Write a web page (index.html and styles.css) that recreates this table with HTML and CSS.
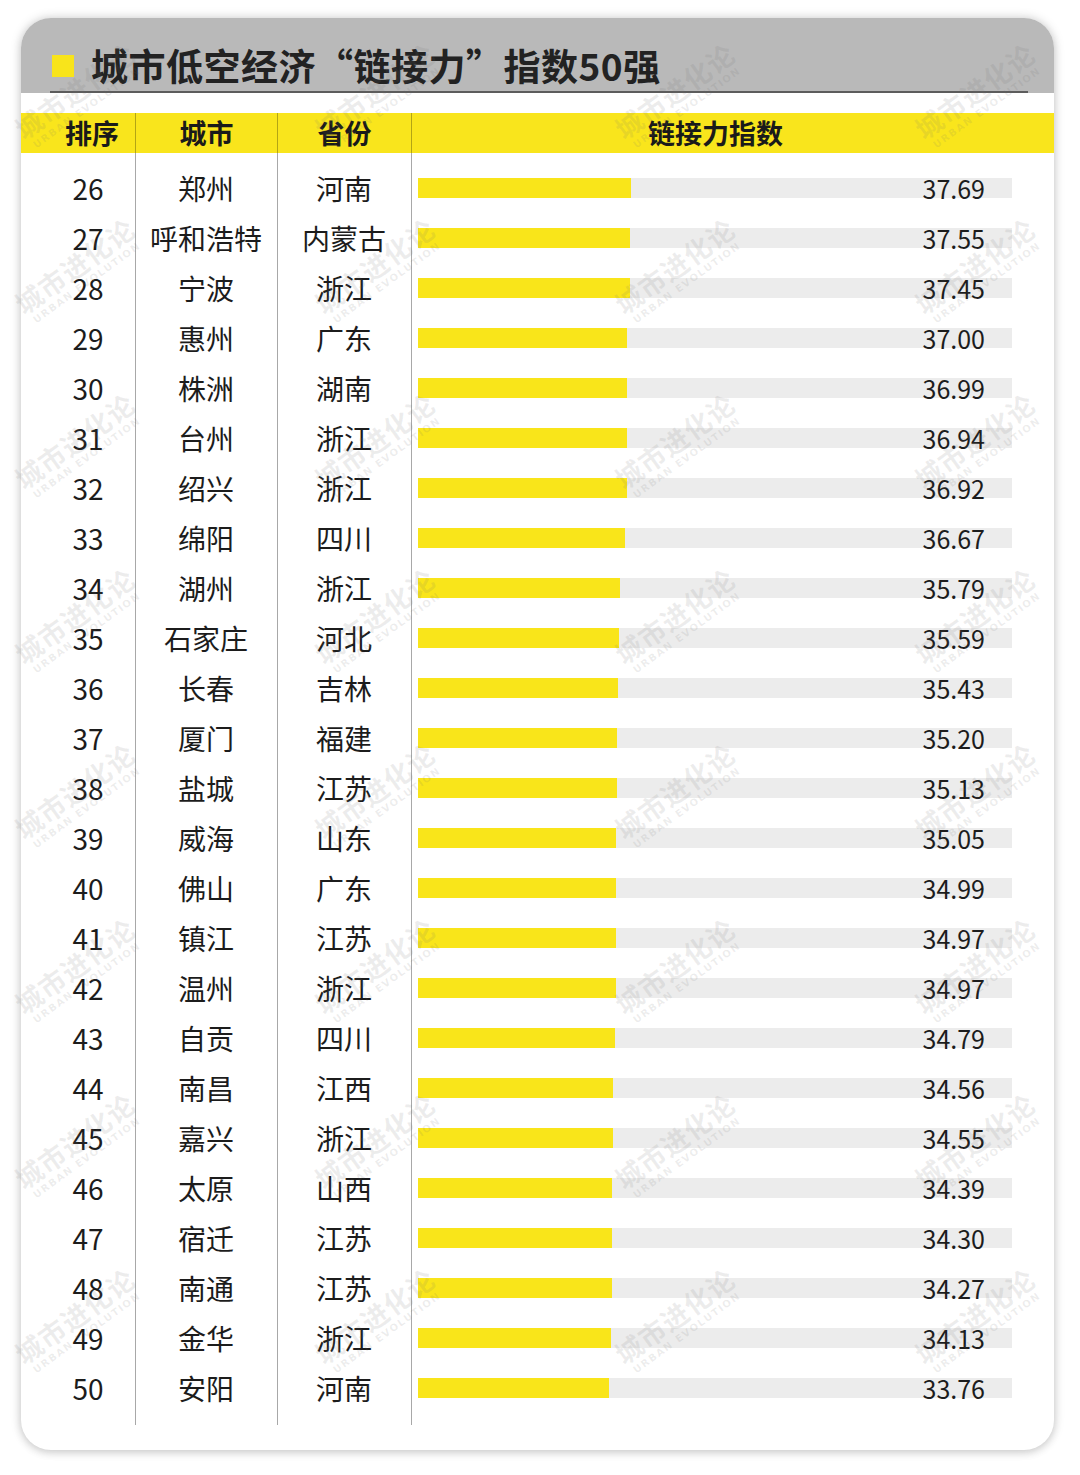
FILE: index.html
```html
<!DOCTYPE html>
<html lang="zh-CN">
<head>
<meta charset="utf-8">
<title>城市低空经济“链接力”指数50强</title>
<link rel="stylesheet" href="styles.css">
</head>
<body>
<div class="card">
  <div class="title-band">
    <div class="title-inner">
      <span class="title-mark"></span>
      <h1 class="title">城市低空经济“链接力”指数50强</h1>
    </div>
  </div>
  <div class="table">
    <div class="row head">
      <div class="c-rank">排序</div>
      <div class="c-city">城市</div>
      <div class="c-prov">省份</div>
      <div class="c-bar">链接力指数</div>
    </div>
    <div class="body">
      <div class="row"><div class="c-rank">26</div><div class="c-city">郑州</div><div class="c-prov">河南</div><div class="c-bar"><div class="track"><div class="fill" style="width:213px"></div><span class="val">37.69</span></div></div></div>
      <div class="row"><div class="c-rank">27</div><div class="c-city">呼和浩特</div><div class="c-prov">内蒙古</div><div class="c-bar"><div class="track"><div class="fill" style="width:212px"></div><span class="val">37.55</span></div></div></div>
      <div class="row"><div class="c-rank">28</div><div class="c-city">宁波</div><div class="c-prov">浙江</div><div class="c-bar"><div class="track"><div class="fill" style="width:211.7px"></div><span class="val">37.45</span></div></div></div>
      <div class="row"><div class="c-rank">29</div><div class="c-city">惠州</div><div class="c-prov">广东</div><div class="c-bar"><div class="track"><div class="fill" style="width:209.1px"></div><span class="val">37.00</span></div></div></div>
      <div class="row"><div class="c-rank">30</div><div class="c-city">株洲</div><div class="c-prov">湖南</div><div class="c-bar"><div class="track"><div class="fill" style="width:209px"></div><span class="val">36.99</span></div></div></div>
      <div class="row"><div class="c-rank">31</div><div class="c-city">台州</div><div class="c-prov">浙江</div><div class="c-bar"><div class="track"><div class="fill" style="width:208.8px"></div><span class="val">36.94</span></div></div></div>
      <div class="row"><div class="c-rank">32</div><div class="c-city">绍兴</div><div class="c-prov">浙江</div><div class="c-bar"><div class="track"><div class="fill" style="width:208.7px"></div><span class="val">36.92</span></div></div></div>
      <div class="row"><div class="c-rank">33</div><div class="c-city">绵阳</div><div class="c-prov">四川</div><div class="c-bar"><div class="track"><div class="fill" style="width:207.3px"></div><span class="val">36.67</span></div></div></div>
      <div class="row"><div class="c-rank">34</div><div class="c-city">湖州</div><div class="c-prov">浙江</div><div class="c-bar"><div class="track"><div class="fill" style="width:202.3px"></div><span class="val">35.79</span></div></div></div>
      <div class="row"><div class="c-rank">35</div><div class="c-city">石家庄</div><div class="c-prov">河北</div><div class="c-bar"><div class="track"><div class="fill" style="width:201.2px"></div><span class="val">35.59</span></div></div></div>
      <div class="row"><div class="c-rank">36</div><div class="c-city">长春</div><div class="c-prov">吉林</div><div class="c-bar"><div class="track"><div class="fill" style="width:200.3px"></div><span class="val">35.43</span></div></div></div>
      <div class="row"><div class="c-rank">37</div><div class="c-city">厦门</div><div class="c-prov">福建</div><div class="c-bar"><div class="track"><div class="fill" style="width:199px"></div><span class="val">35.20</span></div></div></div>
      <div class="row"><div class="c-rank">38</div><div class="c-city">盐城</div><div class="c-prov">江苏</div><div class="c-bar"><div class="track"><div class="fill" style="width:198.6px"></div><span class="val">35.13</span></div></div></div>
      <div class="row"><div class="c-rank">39</div><div class="c-city">威海</div><div class="c-prov">山东</div><div class="c-bar"><div class="track"><div class="fill" style="width:198.1px"></div><span class="val">35.05</span></div></div></div>
      <div class="row"><div class="c-rank">40</div><div class="c-city">佛山</div><div class="c-prov">广东</div><div class="c-bar"><div class="track"><div class="fill" style="width:197.8px"></div><span class="val">34.99</span></div></div></div>
      <div class="row"><div class="c-rank">41</div><div class="c-city">镇江</div><div class="c-prov">江苏</div><div class="c-bar"><div class="track"><div class="fill" style="width:197.7px"></div><span class="val">34.97</span></div></div></div>
      <div class="row"><div class="c-rank">42</div><div class="c-city">温州</div><div class="c-prov">浙江</div><div class="c-bar"><div class="track"><div class="fill" style="width:197.7px"></div><span class="val">34.97</span></div></div></div>
      <div class="row"><div class="c-rank">43</div><div class="c-city">自贡</div><div class="c-prov">四川</div><div class="c-bar"><div class="track"><div class="fill" style="width:196.6px"></div><span class="val">34.79</span></div></div></div>
      <div class="row"><div class="c-rank">44</div><div class="c-city">南昌</div><div class="c-prov">江西</div><div class="c-bar"><div class="track"><div class="fill" style="width:195.3px"></div><span class="val">34.56</span></div></div></div>
      <div class="row"><div class="c-rank">45</div><div class="c-city">嘉兴</div><div class="c-prov">浙江</div><div class="c-bar"><div class="track"><div class="fill" style="width:195.2px"></div><span class="val">34.55</span></div></div></div>
      <div class="row"><div class="c-rank">46</div><div class="c-city">太原</div><div class="c-prov">山西</div><div class="c-bar"><div class="track"><div class="fill" style="width:194.4px"></div><span class="val">34.39</span></div></div></div>
      <div class="row"><div class="c-rank">47</div><div class="c-city">宿迁</div><div class="c-prov">江苏</div><div class="c-bar"><div class="track"><div class="fill" style="width:193.9px"></div><span class="val">34.30</span></div></div></div>
      <div class="row"><div class="c-rank">48</div><div class="c-city">南通</div><div class="c-prov">江苏</div><div class="c-bar"><div class="track"><div class="fill" style="width:193.7px"></div><span class="val">34.27</span></div></div></div>
      <div class="row"><div class="c-rank">49</div><div class="c-city">金华</div><div class="c-prov">浙江</div><div class="c-bar"><div class="track"><div class="fill" style="width:192.9px"></div><span class="val">34.13</span></div></div></div>
      <div class="row"><div class="c-rank">50</div><div class="c-city">安阳</div><div class="c-prov">河南</div><div class="c-bar"><div class="track"><div class="fill" style="width:190.8px"></div><span class="val">33.76</span></div></div></div>
    </div>
  </div>
</div>
<div class="watermarks" aria-hidden="true">
  <div class="wm"><b>城市进化论</b><i>URBAN EVOLUTION</i></div><div class="wm"><b>城市进化论</b><i>URBAN EVOLUTION</i></div><div class="wm"><b>城市进化论</b><i>URBAN EVOLUTION</i></div><div class="wm"><b>城市进化论</b><i>URBAN EVOLUTION</i></div>
  <div class="wm"><b>城市进化论</b><i>URBAN EVOLUTION</i></div><div class="wm"><b>城市进化论</b><i>URBAN EVOLUTION</i></div><div class="wm"><b>城市进化论</b><i>URBAN EVOLUTION</i></div><div class="wm"><b>城市进化论</b><i>URBAN EVOLUTION</i></div>
  <div class="wm"><b>城市进化论</b><i>URBAN EVOLUTION</i></div><div class="wm"><b>城市进化论</b><i>URBAN EVOLUTION</i></div><div class="wm"><b>城市进化论</b><i>URBAN EVOLUTION</i></div><div class="wm"><b>城市进化论</b><i>URBAN EVOLUTION</i></div>
  <div class="wm"><b>城市进化论</b><i>URBAN EVOLUTION</i></div><div class="wm"><b>城市进化论</b><i>URBAN EVOLUTION</i></div><div class="wm"><b>城市进化论</b><i>URBAN EVOLUTION</i></div><div class="wm"><b>城市进化论</b><i>URBAN EVOLUTION</i></div>
  <div class="wm"><b>城市进化论</b><i>URBAN EVOLUTION</i></div><div class="wm"><b>城市进化论</b><i>URBAN EVOLUTION</i></div><div class="wm"><b>城市进化论</b><i>URBAN EVOLUTION</i></div><div class="wm"><b>城市进化论</b><i>URBAN EVOLUTION</i></div>
  <div class="wm"><b>城市进化论</b><i>URBAN EVOLUTION</i></div><div class="wm"><b>城市进化论</b><i>URBAN EVOLUTION</i></div><div class="wm"><b>城市进化论</b><i>URBAN EVOLUTION</i></div><div class="wm"><b>城市进化论</b><i>URBAN EVOLUTION</i></div>
  <div class="wm"><b>城市进化论</b><i>URBAN EVOLUTION</i></div><div class="wm"><b>城市进化论</b><i>URBAN EVOLUTION</i></div><div class="wm"><b>城市进化论</b><i>URBAN EVOLUTION</i></div><div class="wm"><b>城市进化论</b><i>URBAN EVOLUTION</i></div>
  <div class="wm"><b>城市进化论</b><i>URBAN EVOLUTION</i></div><div class="wm"><b>城市进化论</b><i>URBAN EVOLUTION</i></div><div class="wm"><b>城市进化论</b><i>URBAN EVOLUTION</i></div><div class="wm"><b>城市进化论</b><i>URBAN EVOLUTION</i></div>
</div>
</body>
</html>
```

FILE: styles.css
```css
html, body {
  margin: 0;
  padding: 0;
}
body {
  width: 1080px;
  height: 1475px;
  overflow: hidden;
  position: relative;
  background: #ffffff;
  font-family: "Noto Sans CJK SC", "Noto Sans", sans-serif;
  color: #1c1c1c;
}

.card {
  margin: 18px 0 0 21px;
  width: 1033px;
  height: 1432px;
  box-sizing: border-box;
  background: #ffffff;
  border-radius: 30px;
  overflow: hidden;
  box-shadow: 0 0 11px rgba(0, 0, 0, 0.18), 0 3px 8px rgba(0, 0, 0, 0.10);
}

.title-band {
  height: 75px;
  background: #b9b9b9;
  box-sizing: border-box;
}
.title-inner {
  margin: 0 26px 0 29px;
  height: 75px;
  box-sizing: border-box;
  border-bottom: 2px solid #5c5c5c;
  display: flex;
  align-items: center;
  padding: 20px 0 0 2px;
}
.title-mark {
  width: 22px;
  height: 22px;
  background: #f8e41b;
  flex: none;
  margin-top: 2px;
}
.title {
  margin: 0 0 0 17px;
  font-size: 37px;
  line-height: 44px;
  font-weight: 700;
  color: #222222;
  letter-spacing: 0.5px;
}

.table {
  margin-top: 20px;
  background-image:
    linear-gradient(#a8a8a8, #a8a8a8),
    linear-gradient(#a8a8a8, #a8a8a8),
    linear-gradient(#a8a8a8, #a8a8a8);
  background-size: 1px 100%, 1px 100%, 1px 100%;
  background-position: 114px 0, 256px 0, 390px 0;
  background-repeat: no-repeat;
}

.row {
  display: grid;
  grid-template-columns: 114px 142px 134px 1fr;
  height: 50px;
  align-items: center;
  font-size: 28px;
  line-height: 36px;
}
.row > div {
  text-align: center;
}
.row .c-rank {
  padding-left: 20px;
}

.head {
  height: 40px;
  background: #f9e51c;
  font-weight: 700;
  font-size: 27px;
  line-height: 40px;
  color: #1a1a1a;
}
.head > div {
  height: 40px;
}
.head > div + div {
  border-left: 1px solid rgba(0, 0, 0, 0.28);
}
.head .c-rank {
  padding-left: 28px;
}

.body {
  padding: 10px 0 12px;
}

.c-bar {
  padding: 0 42px 0 7px;
}
.head .c-bar {
  padding: 0 42px 0 7px;
}
.track {
  height: 20px;
  background: #ececec;
  display: flex;
  align-items: center;
}
.fill {
  height: 100%;
  background: #f9e51a;
  flex: none;
}
.val {
  margin-left: auto;
  padding-right: 27px;
  font-size: 25px;
  line-height: 20px;
  color: #1c1c1c;
}

.watermarks {
  position: absolute;
  left: 0;
  top: 8px;
  width: 1056px;
  display: grid;
  grid-template-columns: repeat(4, 156px);
  column-gap: 144px;
  grid-auto-rows: 175px;
  pointer-events: none;
}
.wm {
  display: flex;
  flex-direction: column;
  align-items: center;
  justify-content: center;
  transform: rotate(-36deg);
  color: rgba(110, 110, 110, 0.12);
}
.wm b {
  font-size: 27px;
  line-height: 30px;
  font-weight: 700;
  letter-spacing: 1px;
}
.wm i {
  font-style: normal;
  font-family: "DejaVu Sans", sans-serif;
  font-weight: 700;
  font-size: 10px;
  line-height: 12px;
  letter-spacing: 1.5px;
}
```
